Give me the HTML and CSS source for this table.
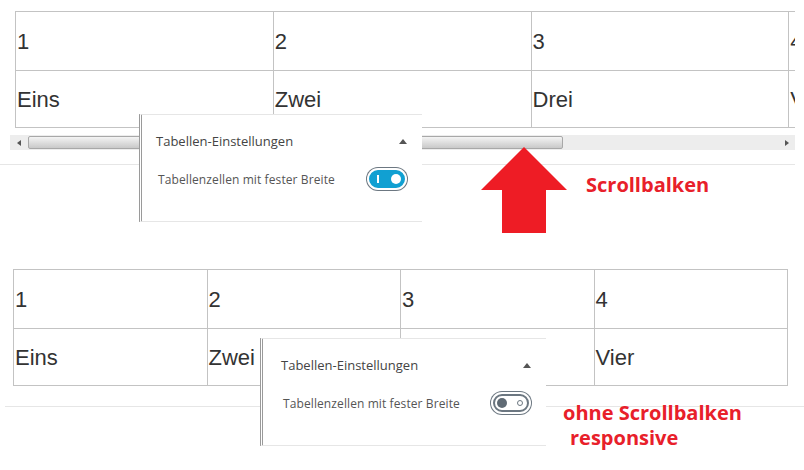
FILE: index.html
```html
<!DOCTYPE html>
<html lang="de">
<head>
<meta charset="utf-8">
<title>Tabellen</title>
<link rel="stylesheet" href="styles.css">
</head>
<body>
<div class="page">
  <div class="scroll-wrap">
    <table class="tbl tbl-fixed">
      <tr><td>1</td><td>2</td><td>3</td><td>4</td></tr>
      <tr><td>Eins</td><td>Zwei</td><td>Drei</td><td>Vier</td></tr>
    </table>
  </div>
  <div class="scrollbar">
    <div class="sb-btn"><span class="tri-left"></span></div>
    <div class="sb-thumb"></div>
    <div class="sb-track"></div>
    <div class="sb-btn sb-btn-right"><span class="tri-right"></span></div>
  </div>
  <div class="sep sep-one"></div>

  <table class="tbl tbl-resp">
    <tr><td>1</td><td>2</td><td>3</td><td>4</td></tr>
    <tr><td>Eins</td><td>Zwei</td><td>Drei</td><td>Vier</td></tr>
  </table>
  <div class="sep sep-two"></div>

  <div class="panel panel-one">
    <div class="panel-head">
      <span class="panel-title">Tabellen-Einstellungen</span>
      <span class="caret"></span>
    </div>
    <div class="panel-row">
      <span class="panel-label">Tabellenzellen mit fester Breite</span>
      <span class="toggle toggle-on"><span class="t-bar"></span><span class="t-knob"></span></span>
    </div>
  </div>

  <div class="panel panel-two">
    <div class="panel-head">
      <span class="panel-title">Tabellen-Einstellungen</span>
      <span class="caret"></span>
    </div>
    <div class="panel-row">
      <span class="panel-label">Tabellenzellen mit fester Breite</span>
      <span class="toggle toggle-off"><span class="t-knob"></span><span class="t-ring"></span></span>
    </div>
  </div>

  <svg class="arrow" width="90" height="92" viewBox="0 0 90 92" aria-hidden="true">
    <polygon points="44,2 87,45 66,45 66,88 22,88 22,45 1,45" fill="#ee1c25"/>
  </svg>
  <div class="note note-one">Scrollbalken</div>
  <div class="note note-two">ohne Scrollbalken<br><span class="indent">responsive</span></div>
</div>
</body>
</html>
```

FILE: styles.css
```css
html, body {
  margin: 0;
  padding: 0;
  background: #fff;
}
.page {
  position: relative;
  width: 804px;
  height: 470px;
  overflow: hidden;
  padding-top: 11px;
  box-sizing: border-box;
  font-family: "Liberation Sans", Arial, sans-serif;
}
.scroll-wrap {
  margin-left: 10px;
  width: 785px;
  padding-left: 5px;
  box-sizing: border-box;
  overflow: hidden;
}
.tbl {
  border-collapse: collapse;
  table-layout: fixed;
}
.tbl td {
  border: 1px solid #c3c3c3;
  height: 57px;
  padding: 2px 0 0 1px;
  box-sizing: border-box;
  font-size: 22px;
  color: #333;
  vertical-align: middle;
  white-space: nowrap;
  overflow: hidden;
}
.tbl tr:first-child td {
  height: 59px;
}
.tbl-fixed {
  width: 1032px;
}
.tbl-resp {
  width: 775px;
  margin-left: 13px;
  margin-top: 104px;
}
.scrollbar {
  display: flex;
  margin-left: 10px;
  margin-top: 7px;
  width: 785px;
  height: 15px;
  background: #ededed;
}
.sb-btn {
  width: 18px;
  display: flex;
  align-items: center;
  justify-content: center;
}
.sb-btn-right {
  width: 16px;
}
.tri-left {
  width: 0;
  height: 0;
  border-top: 3px solid transparent;
  border-bottom: 3px solid transparent;
  border-right: 4px solid #555;
}
.tri-right {
  width: 0;
  height: 0;
  border-top: 3px solid transparent;
  border-bottom: 3px solid transparent;
  border-left: 4px solid #555;
}
.sb-thumb {
  width: 535px;
  margin: 1px 0;
  box-sizing: border-box;
  border: 1px solid #a8a8a8;
  border-radius: 2px;
  background: linear-gradient(#f4f4f4, #dcdcdc 55%, #c9c9c9);
}
.sb-track {
  flex: 1;
}
.sep {
  border-top: 1px solid #e6e6e6;
}
.sep-one {
  margin-top: 14px;
  width: 795px;
}
.sep-two {
  margin-top: 20px;
  margin-left: 5px;
}
.panel {
  position: absolute;
  background: #fff;
  border-top: 1px solid #e6e6e6;
  border-bottom: 1px solid #e6e6e6;
  border-left: 3px double #9a9a9a;
  box-sizing: border-box;
  height: 108px;
  padding: 15px 14px 0 14px;
  font-family: "Open Sans", "Noto Sans", sans-serif;
  color: #555d66;
}
.panel-one {
  left: 139px;
  top: 114px;
  width: 283px;
}
.panel-two {
  left: 260px;
  top: 338px;
  width: 286px;
  padding-left: 18px;
}
.panel-head {
  display: flex;
  justify-content: space-between;
  align-items: center;
  height: 22px;
}
.panel-title {
  font-size: 13px;
  color: #444;
}
.caret {
  width: 0;
  height: 0;
  margin-right: 1px;
  border-left: 4px solid transparent;
  border-right: 4px solid transparent;
  border-bottom: 5px solid #555;
}
.panel-row {
  display: flex;
  justify-content: space-between;
  align-items: center;
  margin-top: 16px;
  height: 22px;
  padding-left: 2px;
}
.panel-label {
  font-size: 12px;
  letter-spacing: 0.1px;
  color: #555;
}
.toggle {
  position: relative;
  width: 36px;
  height: 18px;
  margin-right: 3px;
  box-sizing: border-box;
  border-radius: 9px;
  border: 2px solid;
  box-shadow: 0 0 0 2px #fff, 0 0 0 3px #6c7781;
}
.toggle-on {
  background: #11a0d2;
  border-color: #11a0d2;
}
.toggle-off {
  background: #fff;
  border-color: #6c7781;
}
.t-bar {
  position: absolute;
  left: 6px;
  top: 3px;
  width: 2px;
  height: 8px;
  background: #fff;
}
.t-knob {
  position: absolute;
  top: 2px;
  width: 10px;
  height: 10px;
  border-radius: 50%;
}
.toggle-on .t-knob {
  right: 2px;
  background: #fff;
}
.toggle-off .t-knob {
  left: 2px;
  background: #5f6a74;
}
.t-ring {
  position: absolute;
  right: 4px;
  top: 4px;
  width: 6px;
  height: 6px;
  box-sizing: border-box;
  border-radius: 50%;
  border: 1.5px solid #6c7781;
}
.arrow {
  position: absolute;
  left: 480px;
  top: 145px;
}
.note {
  position: absolute;
  font-family: "Open Sans", "Noto Sans", sans-serif;
  font-weight: 700;
  font-size: 20px;
  line-height: 25px;
  color: #e8202a;
}
.note-one {
  left: 586px;
  top: 172px;
}
.note-two {
  left: 563px;
  top: 400px;
}
.indent {
  padding-left: 7px;
}
```
